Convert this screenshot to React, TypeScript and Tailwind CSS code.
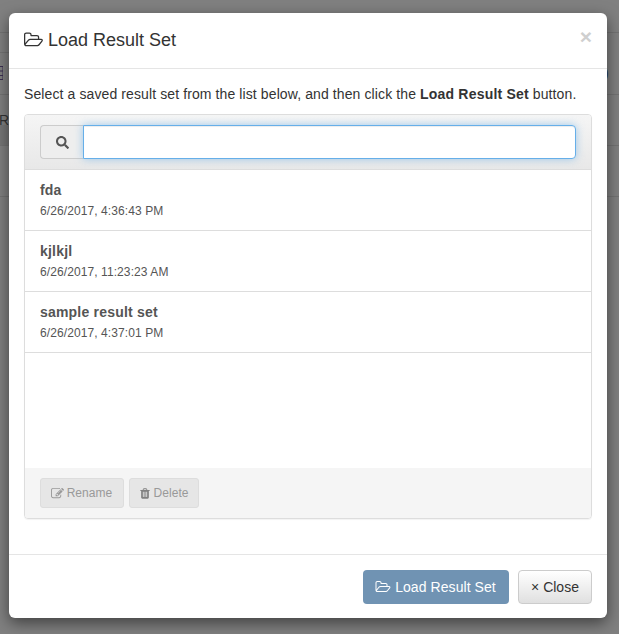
import { FaSearch } from "react-icons/fa";

const savedSets = [
  { name: "fda", date: "6/26/2017, 4:36:43 PM" },
  { name: "kjlkjl", date: "6/26/2017, 11:23:23 AM" },
  { name: "sample result set", date: "6/26/2017, 4:37:01 PM" },
];

function FolderOpen({ className }: { className?: string }) {
  return (
    <svg viewBox="0 0 1920 1792" fill="currentColor" className={className}>
      <path d="M1781 931q0-35-53-35h-1088q-40 0-85.5 21.5t-71.5 52.5l-294 363q-18 24-18 40 0 35 53 35h1088q40 0 86-22t71-53l294-363q18-22 18-39zm-1141-163h768v-160q0-40-28-68t-68-28h-576q-40 0-68-28t-28-68v-64q0-40-28-68t-68-28h-320q-40 0-68 28t-28 68v853l256-315q44-53 116-87.5t140-34.5zm1269 163q0 62-46 120l-295 363q-43 53-116 87.5t-140 34.5h-1088q-92 0-158-66t-66-158v-960q0-92 66-158t158-66h320q92 0 158 66t66 158v32h544q92 0 158 66t66 158v160h192q54 0 99 24.5t67 70.5q15 32 15 68z" />
    </svg>
  );
}

function PencilSquare({ className }: { className?: string }) {
  return (
    <svg viewBox="0 0 1792 1792" fill="currentColor" className={className}>
      <path d="M888 1184l116-116-152-152-116 116v56h96v96h56zm440-720q-16-16-33 1l-350 350q-17 17-1 33t33-1l350-350q17-17 1-33zm80 594v190q0 119-84.5 203.5t-203.5 84.5h-832q-119 0-203.5-84.5t-84.5-203.5v-832q0-119 84.5-203.5t203.5-84.5h832q63 0 117 25 15 7 18 23 3 17-9 29l-49 49q-14 14-32 8-23-6-45-6h-832q-66 0-113 47t-47 113v832q0 66 47 113t113 47h832q66 0 113-47t47-113v-126q0-13 9-22l64-64q15-15 35-7t20 29zm-96-738l288 288-672 672h-288v-288zm444 132l-92 92-288-288 92-92q28-28 68-28t68 28l152 152q28 28 28 68t-28 68z" />
    </svg>
  );
}

function Trash({ className }: { className?: string }) {
  return (
    <svg viewBox="0 0 1792 1792" fill="currentColor" className={className}>
      <path d="M704 1376v-704q0-14-9-23t-23-9h-64q-14 0-23 9t-9 23v704q0 14 9 23t23 9h64q14 0 23-9t9-23zm256 0v-704q0-14-9-23t-23-9h-64q-14 0-23 9t-9 23v704q0 14 9 23t23 9h64q14 0 23-9t9-23zm256 0v-704q0-14-9-23t-23-9h-64q-14 0-23 9t-9 23v704q0 14 9 23t23 9h64q14 0 23-9t9-23zm-544-992h448l-48-117q-7-9-17-11h-317q-10 2-17 11zm928 32v64q0 14-9 23t-23 9h-96v948q0 83-47 143.5t-113 60.5h-832q-66 0-113-58.5t-47-141.5v-952h-96q-14 0-23-9t-9-23v-64q0-14 9-23t23-9h309l70-167q15-37 54-63t79-26h320q40 0 79 26t54 63l70 167h309q14 0 23 9t9 23z" />
    </svg>
  );
}

// page behind the dialog, dimmed; only its edges show
function Backdrop() {
  return (
    <div className="absolute inset-0 overflow-hidden bg-[#808080]">
      <div className="h-[33px] border-b border-[#737373]" />
      <div className="h-[62px] border-b border-[#737373]" />
      <div className="h-[51px] border-b border-[#737373]" />
      <div className="h-[51px] border-b border-[#737373]" />
      <div className="absolute left-0 top-[52px] h-px w-[9px] bg-[#737373]" />
      <div className="absolute left-0 top-[125px] h-[20px] w-[9px] bg-[#767676]" />
      <svg viewBox="0 0 3 14" fill="none" stroke="#3b2f52" className="absolute left-0 top-[66px] h-[14px] w-[3px]">
        <path d="M0 .5h3v13H0M0 5h3M0 9.5h3" />
      </svg>
      <span className="absolute left-[-1px] top-[110px] text-[14px] leading-[20px] text-[#333]">Re</span>
      <span className="absolute left-[604px] top-[65px] text-[14px] leading-[16px] text-[#2a3a5a]">)</span>
    </div>
  );
}

export default function App() {
  return (
    <div className="relative h-[634px] w-[619px] overflow-hidden font-['Liberation_Sans',Arial,sans-serif] text-[14px] text-[#333]">
      <Backdrop />
      <div className="absolute left-[9px] top-[13px] flex h-[605px] w-[598px] flex-col rounded-[6px] bg-white shadow-[0_5px_15px_rgba(0,0,0,0.5)]">
        <div className="relative flex h-[56px] items-center border-b border-[#e5e5e5] px-[15px] pb-[2px]">
          <FolderOpen className="mr-[5px] h-[18px] w-[19px]" />
          <h4 className="text-[18px] leading-[20px] text-[#333]">Load Result Set</h4>
          <span className="absolute right-[15px] top-[13px] text-[21px] font-bold leading-[21px] text-[#cfcfcf]">×</span>
        </div>

        <div className="flex-1 px-[15px] pt-[15px]">
          <p className="h-[30px] leading-[20px] tracking-[0.105px]">
            Select a saved result set from the list below, and then click the <b className="tracking-[0.2px]">Load Result Set</b> button.
          </p>
          <div className="flex h-[405px] flex-col overflow-hidden rounded-[4px] border border-[#ddd] shadow-[0_1px_1px_rgba(0,0,0,0.05)]">
            <div className="flex h-[55px] shrink-0 items-center border-b border-[#ddd] bg-gradient-to-b from-[#f5f5f5] to-[#e8e8e8] px-[15px]">
              <div className="flex h-[34px] w-full">
                <span className="flex w-[43px] items-center justify-center rounded-l-[4px] border border-r-0 border-[#ccc] bg-[#eee] text-[#555]">
                  <FaSearch className="h-[13px] w-[13px]" />
                </span>
                <input className="h-[34px] flex-1 rounded-r-[4px] border border-[#66afe9] bg-white px-3 shadow-[inset_0_1px_1px_rgba(0,0,0,0.075),0_0_8px_rgba(102,175,233,0.6)] outline-none" />
              </div>
            </div>
            <div className="flex-1">
              {savedSets.map((s) => (
                <div key={s.name} className="h-[61px] border-b border-[#ddd] px-[15px] pt-[10px] text-[#555]">
                  <div className="font-bold leading-[20px] tracking-[0.2px]">{s.name}</div>
                  <div className="mt-[1px] text-[12px] leading-[20px] tracking-[0.09px]">{s.date}</div>
                </div>
              ))}
            </div>
            <div className="flex h-[50px] shrink-0 items-center gap-[5px] bg-[#f5f5f5] px-[15px]">
              <button className="flex h-[30px] w-[84px] items-center justify-center gap-[3px] rounded-[3px] border border-[#ddd] bg-[#e6e6e6] pr-[1px] text-[12px] tracking-[0.05px] text-[#999]">
                <PencilSquare className="h-[13px] w-[13px]" /> Rename
              </button>
              <button className="flex h-[30px] w-[70px] items-center justify-center gap-[3px] rounded-[3px] border border-[#ddd] bg-[#e6e6e6] pr-[1px] text-[12px] tracking-[0.05px] text-[#999]">
                <Trash className="h-[13px] w-[12px] text-[#808080]" /> Delete
              </button>
            </div>
          </div>
        </div>

        <div className="flex h-[64px] shrink-0 items-start justify-end gap-[9px] border-t border-[#e5e5e5] px-[15px] pt-[15px]">
          <button className="flex h-[34px] w-[146px] items-center justify-center gap-[4px] rounded-[4px] bg-[#7093b3] pr-[1px] tracking-[0.07px] text-white">
            <FolderOpen className="h-[14px] w-[16px]" /> Load Result Set
          </button>
          <button className="flex h-[34px] w-[74px] items-center justify-center rounded-[4px] border border-[#ccc] bg-gradient-to-b from-white to-[#e0e0e0] text-[#333]">
            × Close
          </button>
        </div>
      </div>
    </div>
  );
}
